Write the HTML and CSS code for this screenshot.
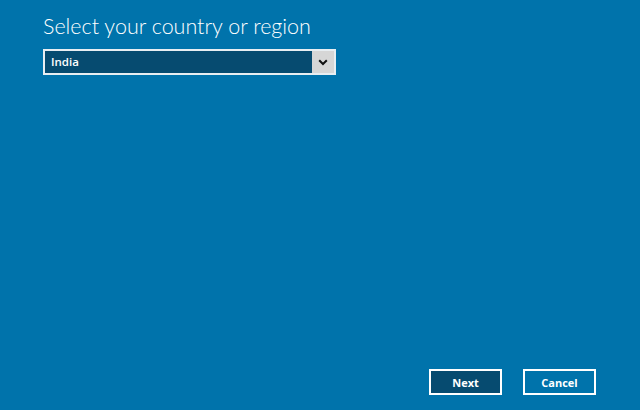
FILE: index.html
```html
<!DOCTYPE html>
<html>
<head>
<meta charset="utf-8">
<link rel="stylesheet" href="styles.css">
</head>
<body>
<div class="page">
  <div class="content">
    <h1 class="title">Select your country or region</h1>
    <div class="select">
      <span class="select-value">India</span>
      <span class="select-arrow">
        <svg width="10" height="7" viewBox="0 0 10 7"><path d="M1.2 1.2 L5 5 L8.8 1.2" fill="none" stroke="#111" stroke-width="2"/></svg>
      </span>
    </div>
  </div>
  <div class="actions">
    <button class="btn btn-primary">Next</button>
    <button class="btn">Cancel</button>
  </div>
</div>
</body>
</html>
```
FILE: styles.css
```css
html, body {
  margin: 0;
  padding: 0;
  width: 640px;
  height: 410px;
  overflow: hidden;
  background: #0073ab;
}
.page {
  width: 640px;
  height: 410px;
  box-sizing: border-box;
  display: flex;
  flex-direction: column;
  justify-content: space-between;
  padding: 12px 44px 15px 43px;
  font-family: "Open Sans", "Noto Sans", sans-serif;
  color: #fff;
}
.title {
  margin: 0 0 9px 0;
  font-family: Lato, "Open Sans", sans-serif;
  font-weight: 300;
  font-size: 21.5px;
  line-height: 28px;
  letter-spacing: 0;
}
.select {
  width: 293px;
  height: 26px;
  box-sizing: border-box;
  border: 2px solid #e8eef2;
  background: #064b70;
  display: flex;
  align-items: stretch;
}
.select-value {
  flex: 1;
  padding-left: 6px;
  font-size: 11.5px;
  font-weight: 600;
  line-height: 22px;
}
.select-arrow {
  width: 22px;
  background: #d6d6d6;
  display: flex;
  align-items: center;
  justify-content: center;
}
.actions {
  display: flex;
  justify-content: flex-end;
  gap: 21px;
}
.btn {
  width: 73px;
  height: 26px;
  box-sizing: border-box;
  border: 2px solid #fff;
  background: transparent;
  color: #fff;
  font-family: "Open Sans", "Noto Sans", sans-serif;
  font-weight: 700;
  font-size: 11px;
  padding: 0;
  line-height: 23px;
}
.btn-primary {
  background: #064b70;
}
```
